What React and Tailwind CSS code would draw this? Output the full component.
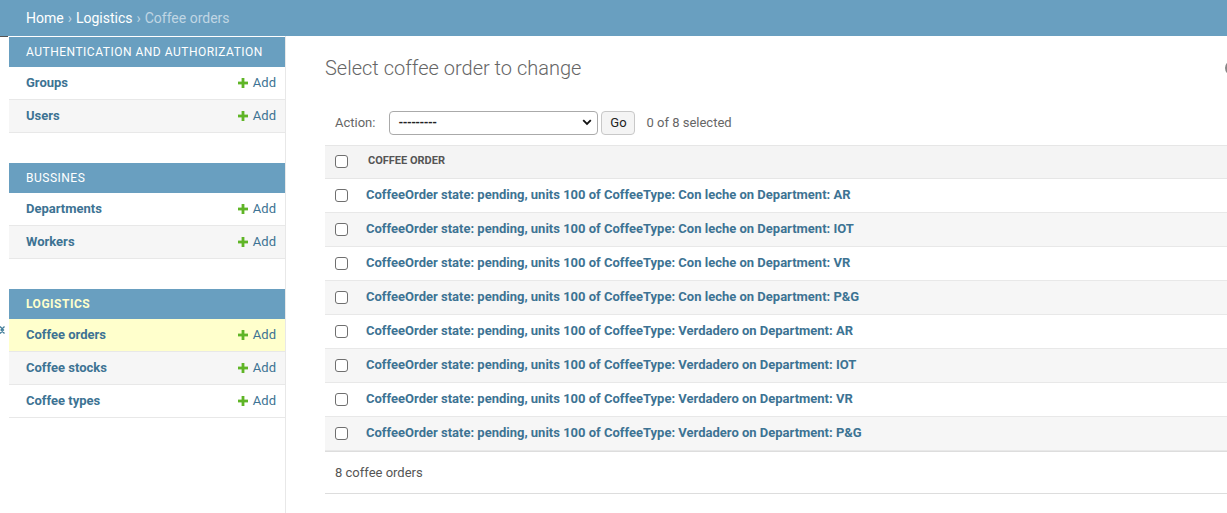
import React from "react";

const linkColor = "text-[#3d7393]";

function Plus() {
  return (
    <svg width="10" height="10" viewBox="0 0 10 10" className="mr-[5px]">
      <rect x="3.6" y="0" width="2.8" height="10" fill="#5fb526" />
      <rect x="0" y="3.6" width="10" height="2.8" fill="#5fb526" />
    </svg>
  );
}

function Module({ title, rows, current }) {
  return (
    <div className="mb-[30px]">
      <div
        className={`h-[30px] pb-px flex items-center pl-[17px] bg-[#699fc0] text-[12px] tracking-[0.5px] uppercase ${
          current ? "text-[#ffffcc] font-bold" : "text-white"
        }`}
      >
        {title}
      </div>
      {rows.map((r, i) => (
        <div
          key={r}
          className={`h-[33px] flex items-center justify-between pl-[17px] pr-[9px] border-b border-[#e8e8e8] ${
            current && i === 0 ? "bg-[#ffffcc]" : i % 2 === 1 ? "bg-[#f6f6f6]" : "bg-white"
          }`}
        >
          <span className={`text-[13px] font-bold ${linkColor}`}>{r}</span>
          <span className={`flex items-center text-[13px] ${linkColor}`}>
            <Plus />
            Add
          </span>
        </div>
      ))}
    </div>
  );
}

const orders = [
  "Con leche on Department: AR",
  "Con leche on Department: IOT",
  "Con leche on Department: VR",
  "Con leche on Department: P&G",
  "Verdadero on Department: AR",
  "Verdadero on Department: IOT",
  "Verdadero on Department: VR",
  "Verdadero on Department: P&G",
];

function Box() {
  return (
    <span className="inline-block w-[13px] h-[13px] rounded-[3px] border border-[#6f6f6f] bg-white" />
  );
}

export default function App() {
  return (
    <div
      className="relative w-[1227px] h-[513px] overflow-hidden bg-white text-[#333]"
      style={{ fontFamily: "Roboto, 'Liberation Sans', sans-serif" }}
    >
      <div className="h-[36px] bg-[#699fc0] flex items-center pl-[26px] text-[14px]">
        <span className="text-white">Home</span>
        <span className="text-[#c0d6e4] mx-[4px]">›</span>
        <span className="text-white">Logistics</span>
        <span className="text-[#c0d6e4] mx-[4px]">›</span>
        <span className="text-[#c0d6e4]">Coffee orders</span>
      </div>
      <div className="flex">
        <div className="relative w-[286px] shrink-0 border-r border-[#e8e8e8] h-[477px] pl-[9px] pt-px">
          <div className="absolute left-0 top-0 w-[8px] h-px bg-[#555]" />
          <svg className="absolute left-0 top-[290px]" width="5" height="8" viewBox="0 0 5 8">
            <path d="M0 0.5 L3.5 4 L0 7.5 M4.5 0.5 L1 4 L4.5 7.5" stroke="#447e9b" strokeWidth="1.3" fill="none" />
          </svg>
          <div className="w-[276px]">
            <Module title="Authentication and Authorization" rows={["Groups", "Users"]} />
            <Module title="Bussines" rows={["Departments", "Workers"]} />
            <Module title="Logistics" rows={["Coffee orders", "Coffee stocks", "Coffee types"]} current />
          </div>
        </div>
        <div className="flex-1 min-w-0 pl-[39px] pt-[20px]">
          <h1 className="text-[20px] leading-[24px] font-light text-[#666] mb-[20px]">
            Select coffee order to change
          </h1>
          <div className="flex items-center h-[45px] pl-[10px] text-[13px] text-[#666]">
            <span>Action:</span>
            <div className="ml-[14px] w-[209px] h-[24px] rounded-[4px] border border-[#aaa] bg-white flex items-center justify-between pl-[8px] pr-[5px] text-[#222] text-[12px]">
              <span className="font-bold tracking-[-0.5px]">---------</span>
              <svg width="10" height="7" viewBox="0 0 10 7">
                <path d="M1.2 1.2 L5 5 L8.8 1.2" stroke="#111" strokeWidth="1.8" fill="none" />
              </svg>
            </div>
            <div className="ml-[3px] w-[34px] h-[24px] rounded-[4px] border border-[#c8c8c8] bg-[#f4f4f4] flex items-center justify-center text-[13px] text-[#222]">
              Go
            </div>
            <span className="ml-[11px]">0 of 8 selected</span>
          </div>
          <div className="w-[920px]">
            <div className="h-[34px] pb-px flex items-center bg-[#f4f4f4] border-y border-[#e6e6e6] pl-[10px]">
              <Box />
              <span className="ml-[20px] text-[11px] font-bold text-[#555] uppercase">Coffee order</span>
            </div>
            {orders.map((o, i) => (
              <div
                key={o}
                className={`h-[34px] pb-px flex items-center pl-[10px] border-b border-[#e8e8e8] ${
                  i % 2 === 1 ? "bg-[#f6f6f6]" : "bg-white"
                }`}
              >
                <Box />
                <span className={`ml-[18px] text-[13px] font-bold ${linkColor}`}>
                  CoffeeOrder state: pending, units 100 of CoffeeType: {o}
                </span>
              </div>
            ))}
            <div className="h-[43px] flex items-center pl-[10px] border-t border-[#ddd] border-b text-[13px] text-[#555]">
              8 coffee orders
            </div>
          </div>
        </div>
      </div>
      <div className="absolute left-[1225px] top-[60px] w-[40px] h-[16px] rounded-full border-2 border-[#888]" />
    </div>
  );
}
